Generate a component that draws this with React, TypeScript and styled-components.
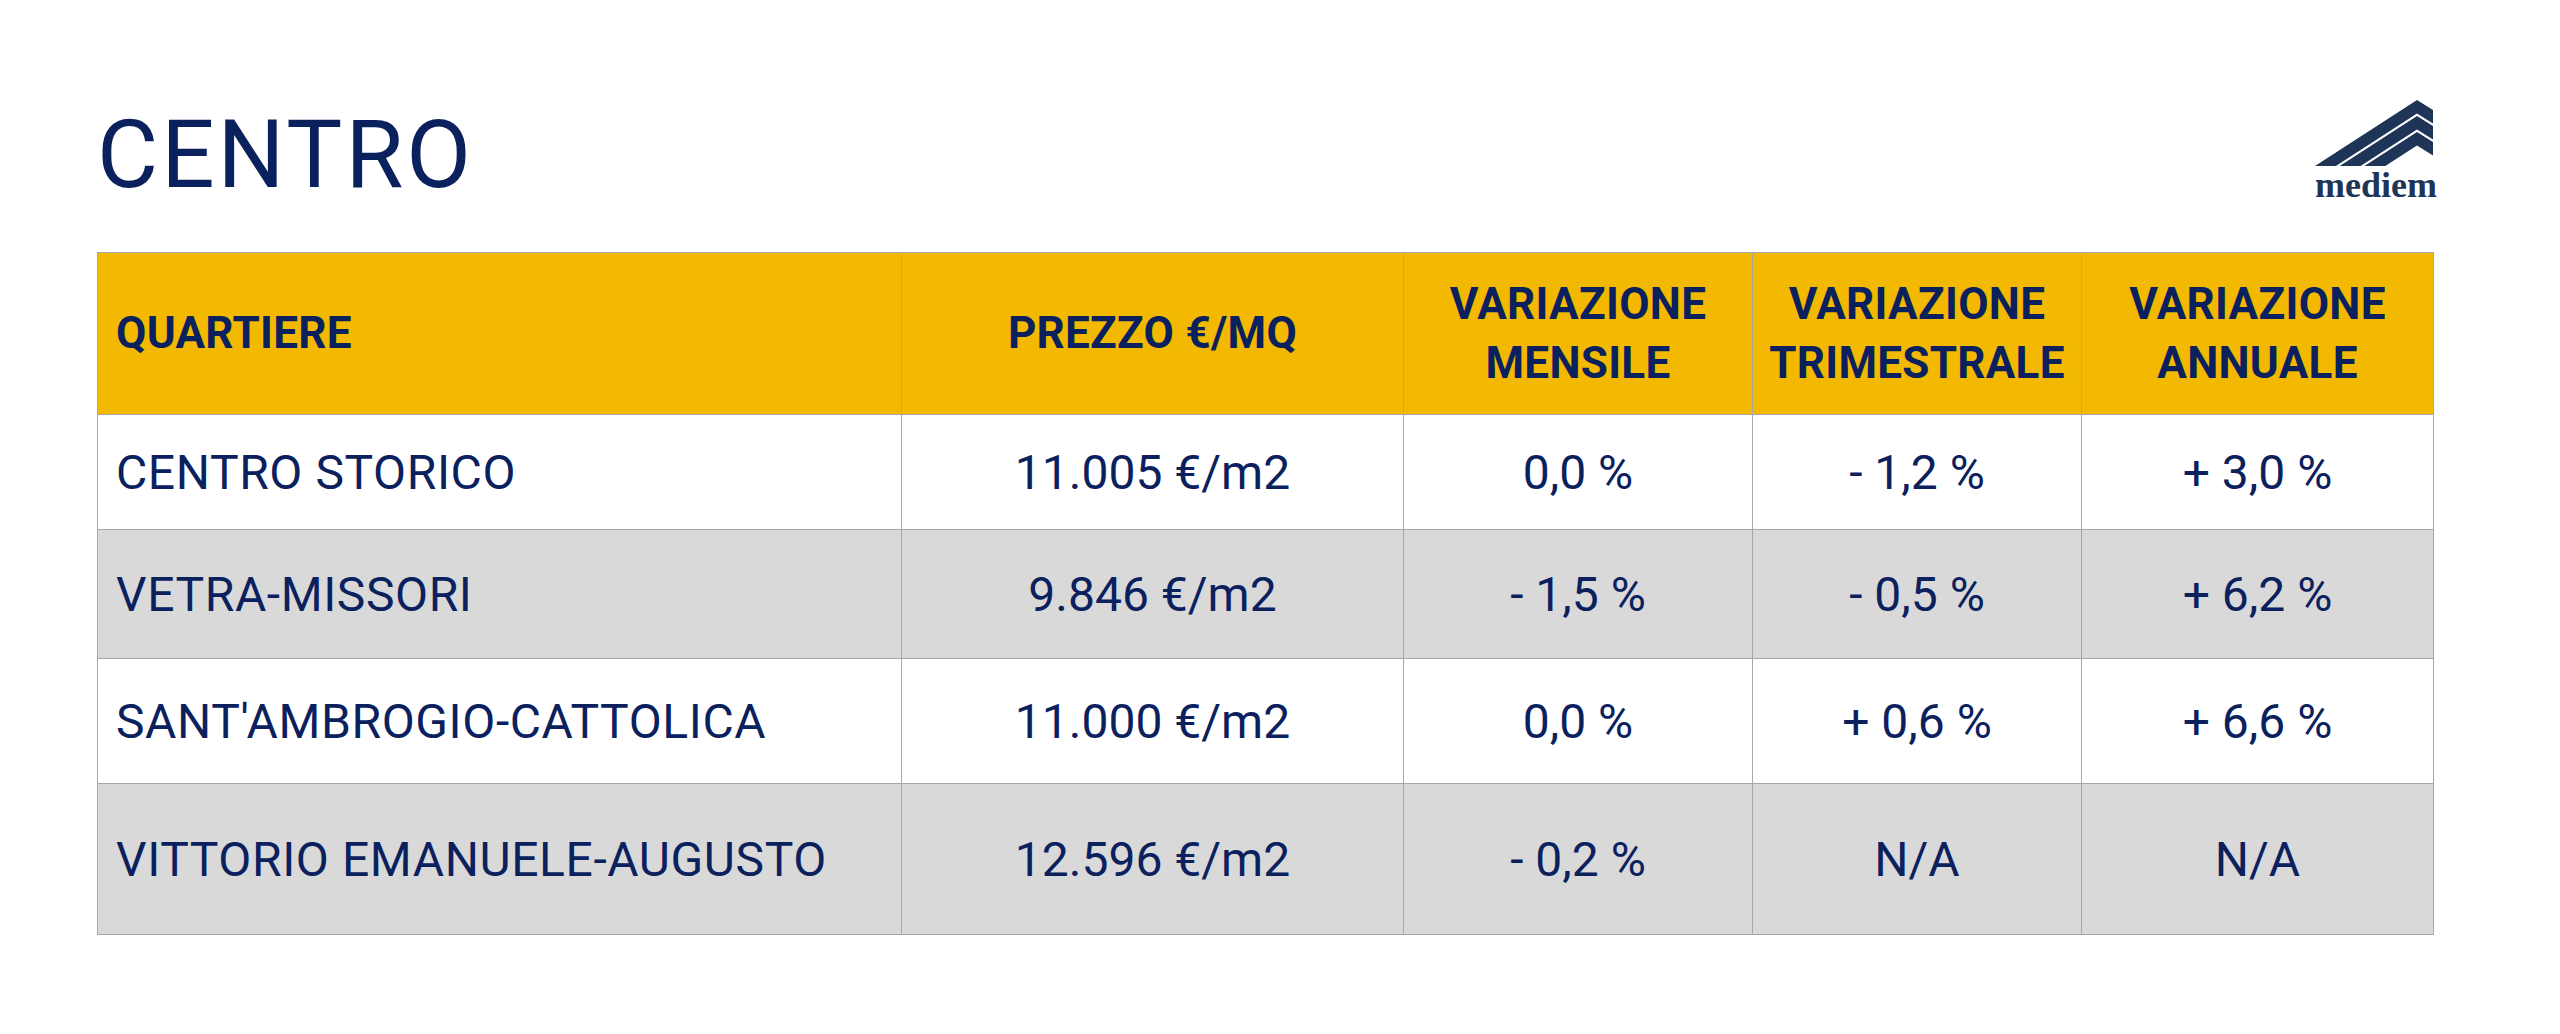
import styled, { createGlobalStyle } from "styled-components";

const GlobalStyle = createGlobalStyle`
  html, body {
    margin: 0;
    padding: 0;
    background: #ffffff;
  }
  body {
    font-family: Roboto, "Liberation Sans", Arial, sans-serif;
    color: #0b215e;
  }
`;

const Page = styled.div`
  width: 2560px;
  min-height: 1034px;
  box-sizing: border-box;
  padding: 100px 127px 0 97px;
  background: #ffffff;
`;

const TopBar = styled.div`
  display: flex;
  justify-content: space-between;
  align-items: flex-start;
`;

const Title = styled.h1`
  margin: 8px 0 0;
  font-family: Roboto, "Liberation Sans", sans-serif;
  font-size: 94px;
  font-weight: 400;
  line-height: 1;
  letter-spacing: 3px;
  color: #0b215e;
`;

const Logo = styled.div`
  display: flex;
  flex-direction: column;
  align-items: flex-end;
  width: 118px;
`;

const LogoWord = styled.span`
  display: block;
  font-family: "Liberation Serif", "DejaVu Serif", serif;
  font-weight: 700;
  font-size: 36px;
  line-height: 1;
  color: #1f3557;
  width: 118px;
  text-align: center;
`;

const Table = styled.table`
  margin-top: 49px;
  width: 2336px;
  border-collapse: collapse;
  table-layout: fixed;
`;

const Row = styled.tr<{ $height: number; $shade?: boolean }>`
  height: ${(p) => p.$height}px;
  background: ${(p) => (p.$shade ? "#d9d9d9" : "#ffffff")};
`;

const HeadRow = styled.tr`
  height: 162px;
  background: #f2b900;
`;

const HeadCell = styled.th<{ $left?: boolean }>`
  border: 1px solid #a8a8a8;
  padding: ${(p) => (p.$left ? "0 0 0 18px" : "0")};
  text-align: ${(p) => (p.$left ? "left" : "center")};
  vertical-align: middle;
  font-family: Roboto, "Liberation Sans", sans-serif;
  font-weight: 700;
  font-size: 44px;
  line-height: 59px;
  letter-spacing: 0.3px;
  color: #0b215e;
`;

const Cell = styled.td<{ $left?: boolean }>`
  border: 1px solid #a8a8a8;
  padding: ${(p) => (p.$left ? "0 0 0 18px" : "0")};
  text-align: ${(p) => (p.$left ? "left" : "center")};
  vertical-align: middle;
  font-family: Roboto, "Liberation Sans", sans-serif;
  font-weight: 400;
  font-size: 48px;
  letter-spacing: ${(p) => (p.$left ? "0.6px" : "0")};
  color: #0b215e;
  white-space: nowrap;
`;

const columns = [804, 502, 349, 329, 352];

const rows = [
  { name: "CENTRO STORICO", price: "11.005 €/m2", m: "0,0 %", t: "- 1,2 %", a: "+ 3,0 %", h: 115 },
  { name: "VETRA-MISSORI", price: "9.846 €/m2", m: "- 1,5 %", t: "- 0,5 %", a: "+ 6,2 %", h: 129 },
  { name: "SANT'AMBROGIO-CATTOLICA", price: "11.000 €/m2", m: "0,0 %", t: "+ 0,6 %", a: "+ 6,6 %", h: 125 },
  { name: "VITTORIO EMANUELE-AUGUSTO", price: "12.596 €/m2", m: "- 0,2 %", t: "N/A", a: "N/A", h: 151 },
];

function MediemLogo() {
  return (
    <Logo>
      <svg width="118" height="67" viewBox="0 0 118 67">
        <g fill="#1f3557">
          <polygon points="0,66 102,0 118,10 118,23.5 102,13.5 20.9,66" />
          <polygon points="24.7,66 102,16 118,26 118,39.5 102,29.5 45.6,66" />
          <polygon points="49.4,66 102,32 118,42 118,55.5 102,45.5 70.3,66" />
        </g>
      </svg>
      <LogoWord>mediem</LogoWord>
    </Logo>
  );
}

export default function App() {
  return (
    <Page>
      <GlobalStyle />
      <TopBar>
        <Title>CENTRO</Title>
        <MediemLogo />
      </TopBar>
      <Table>
        <colgroup>
          {columns.map((w, i) => (
            <col key={i} style={{ width: w }} />
          ))}
        </colgroup>
        <thead>
          <HeadRow>
            <HeadCell $left>QUARTIERE</HeadCell>
            <HeadCell>PREZZO €/MQ</HeadCell>
            <HeadCell>
              VARIAZIONE
              <br />
              MENSILE
            </HeadCell>
            <HeadCell>
              VARIAZIONE
              <br />
              TRIMESTRALE
            </HeadCell>
            <HeadCell>
              VARIAZIONE
              <br />
              ANNUALE
            </HeadCell>
          </HeadRow>
        </thead>
        <tbody>
          {rows.map((r, i) => (
            <Row key={r.name} $height={r.h} $shade={i % 2 === 1}>
              <Cell $left>{r.name}</Cell>
              <Cell>{r.price}</Cell>
              <Cell>{r.m}</Cell>
              <Cell>{r.t}</Cell>
              <Cell>{r.a}</Cell>
            </Row>
          ))}
        </tbody>
      </Table>
    </Page>
  );
}
